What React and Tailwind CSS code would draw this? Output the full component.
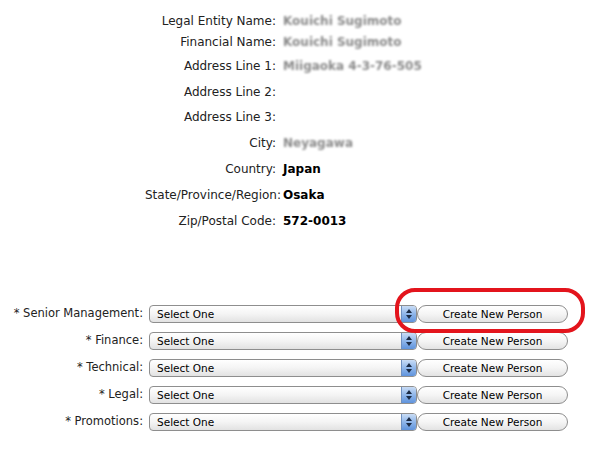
import React from "react";

const info = [
  { label: "Legal Entity Name:", value: "Kouichi Sugimoto", blur: true, h: "h-[20px]" },
  { label: "Financial Name:", value: "Kouichi Sugimoto", blur: true, h: "h-[22px]" },
  { label: "Address Line 1:", value: "Miigaoka 4-3-76-505", blur: true, h: "h-[26px]" },
  { label: "Address Line 2:", value: "", h: "h-[25px]" },
  { label: "Address Line 3:", value: "", h: "h-[26px]" },
  { label: "City:", value: "Neyagawa", blur: true, h: "h-[26px]" },
  { label: "Country:", value: "Japan", h: "h-[26px]" },
  { label: "State/Province/Region:", value: "Osaka", h: "h-[26px]", tight: true },
  { label: "Zip/Postal Code:", value: "572-0013", h: "h-[25px]" },
];

const roles = ["Senior Management", "Finance", "Technical", "Legal", "Promotions"];

function SelectBox() {
  return (
    <div className="flex h-[18px] w-[268px] rounded-[4px] border border-[#8e8e8e] overflow-hidden bg-gradient-to-b from-white via-[#f4f4f4] to-[#e2e2e2]">
      <div className="flex-1 pl-[7px] text-[10.5px] leading-[16px] text-black">Select One</div>
      <div className="w-[15px] flex flex-col items-center justify-center gap-[2px] border-l border-[#6d8fc0] bg-gradient-to-b from-[#c9dcf5] via-[#8fb6ea] to-[#5f93dc]">
        <svg width="6" height="4" viewBox="0 0 6 4"><path d="M3 0L6 4H0z" fill="#1b2b45" /></svg>
        <svg width="6" height="4" viewBox="0 0 6 4"><path d="M0 0H6L3 4z" fill="#1b2b45" /></svg>
      </div>
    </div>
  );
}

function PersonButton() {
  return (
    <button className="h-[18px] w-[151px] rounded-full border border-[#8e8e8e] bg-gradient-to-b from-white via-[#f5f5f5] to-[#e3e3e3] text-[10.5px] leading-[16px] text-black text-center">
      Create New Person
    </button>
  );
}

export default function App() {
  return (
    <div
      className="relative w-[613px] h-[457px] bg-white text-[#222] text-[12px]"
      style={{ fontFamily: '"Lucida Grande", "DejaVu Sans", sans-serif' }}
    >
      <div className="pt-[11px]">
        {info.map((row) => (
          <div key={row.label} className={`flex items-center ${row.h}`}>
            <div className={`${row.tight ? "w-[281px]" : "w-[276px]"} text-right whitespace-nowrap text-[#222]`}>
              {row.label}
            </div>
            <div
              className={`${row.tight ? "ml-[2px]" : "ml-[7px]"} whitespace-nowrap font-bold ${
                row.blur ? "text-[#8a8a8a] blur-[1.2px]" : "text-black"
              }`}
            >
              {row.value}
            </div>
          </div>
        ))}
      </div>

      <div className="mt-[67px]">
        {roles.map((r) => (
          <div key={r} className="flex items-center h-[27px]">
            <div className="w-[143px] text-right whitespace-nowrap text-[11.5px] text-[#222]">* {r}:</div>
            <div className="ml-[6px] flex items-center">
              <SelectBox />
              <PersonButton />
            </div>
          </div>
        ))}
      </div>

      <div className="absolute left-[395px] top-[288px] w-[190px] h-[45px] rounded-[20px] border-[4px] border-[#e3141c]" />
    </div>
  );
}
